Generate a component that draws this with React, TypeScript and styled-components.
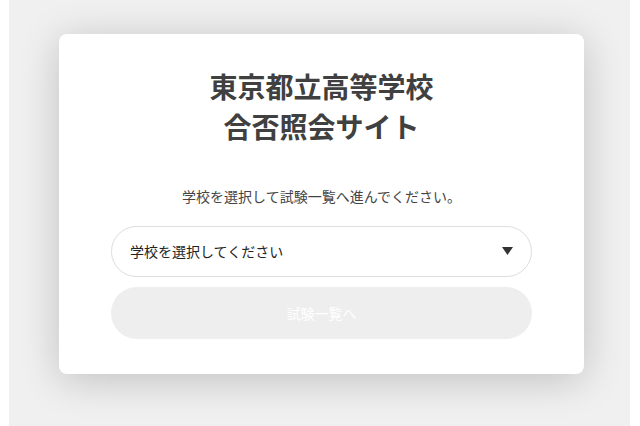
import styled, { createGlobalStyle } from 'styled-components';

const GlobalStyle = createGlobalStyle`
  html, body {
    margin: 0;
    padding: 0;
    background: #ffffff;
  }
  body {
    font-family: "Noto Sans CJK JP", "Noto Sans", sans-serif;
  }
`;

const Page = styled.div`
  margin: 0 10px 0 9px;
  min-height: 426px;
  background: #f0f0f0;
  padding: 34px 46px 52px 50px;
  box-sizing: border-box;
  display: flex;
  justify-content: center;
  align-items: flex-start;
`;

const Card = styled.div`
  width: 525px;
  box-sizing: border-box;
  background: #ffffff;
  border-radius: 8px;
  box-shadow: 0 6px 40px rgba(0, 0, 0, 0.2);
  padding: 32px 52px 35px;
  display: flex;
  flex-direction: column;
  align-items: stretch;
`;

const Title = styled.h1`
  margin: 0;
  font-size: 28px;
  line-height: 40px;
  font-weight: 700;
  color: #404040;
  text-align: center;
`;

const Lead = styled.p`
  margin: 40px 0 0;
  font-size: 14px;
  line-height: 20px;
  color: #444444;
  text-align: center;
`;

const Select = styled.div`
  margin-top: 20px;
  height: 51px;
  box-sizing: border-box;
  border: 1px solid #dddddd;
  border-radius: 26px;
  padding: 0 18px 2px 18px;
  display: flex;
  align-items: center;
  justify-content: space-between;
  font-size: 14px;
  color: #222222;
  cursor: pointer;
`;

const Caret = styled.svg`
  width: 11px;
  height: 8px;
  fill: #333333;
`;

const Submit = styled.button<{ disabled?: boolean }>`
  margin-top: 10px;
  height: 52px;
  border: none;
  border-radius: 26px;
  background: ${(p) => (p.disabled ? '#eeeeee' : '#333333')};
  color: #ffffff;
  font-family: inherit;
  font-size: 14px;
  padding-bottom: 2px;
  cursor: ${(p) => (p.disabled ? 'default' : 'pointer')};
`;

const App = () => {
  return (
    <>
      <GlobalStyle />
      <Page>
        <Card>
          <Title>
            東京都立高等学校
            <br />
            合否照会サイト
          </Title>
          <Lead>学校を選択して試験一覧へ進んでください。</Lead>
          <Select>
            <span>学校を選択してください</span>
            <Caret viewBox="0 0 11 8">
              <path d="M0 0 H11 L5.5 8 Z" />
            </Caret>
          </Select>
          <Submit disabled>試験一覧へ</Submit>
        </Card>
      </Page>
    </>
  );
};

export default App;
